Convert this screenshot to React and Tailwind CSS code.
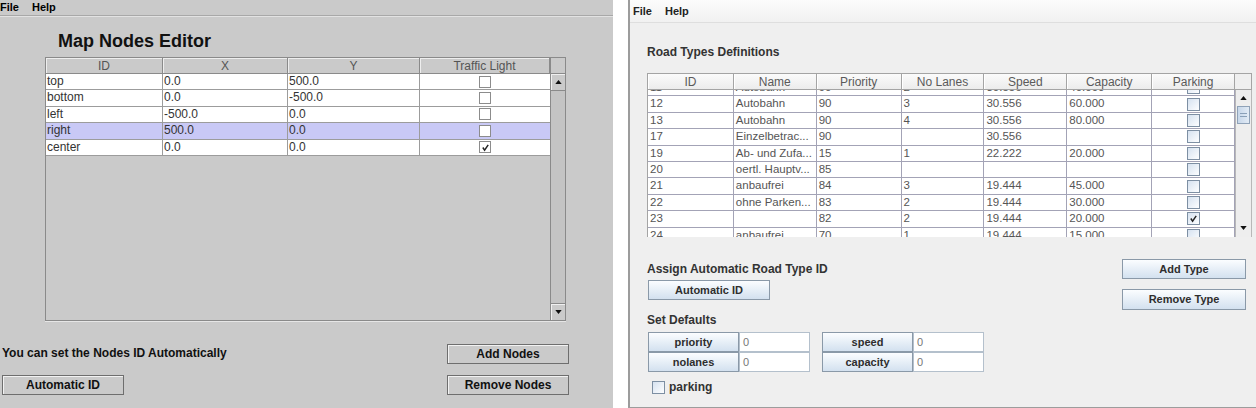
import { useLayoutEffect, useRef } from "react";

const nodeRows = [
  { id: "top", x: "0.0", y: "500.0", light: false },
  { id: "bottom", x: "0.0", y: "-500.0", light: false },
  { id: "left", x: "-500.0", y: "0.0", light: false },
  { id: "right", x: "500.0", y: "0.0", light: false, selected: true },
  { id: "center", x: "0.0", y: "0.0", light: true },
];

const roadCols = [
  { name: "ID", w: "w-[86px]" },
  { name: "Name", w: "w-[83px]" },
  { name: "Priority", w: "w-[85px]" },
  { name: "No Lanes", w: "w-[83px]" },
  { name: "Speed", w: "w-[83px]" },
  { name: "Capacity", w: "w-[85px]" },
  { name: "Parking", w: "w-[83px]" },
];

const roadRows = [
  ["11", "Autobahn", "90", "2", "30.556", "40.000", false],
  ["12", "Autobahn", "90", "3", "30.556", "60.000", false],
  ["13", "Autobahn", "90", "4", "30.556", "80.000", false],
  ["17", "Einzelbetrac...", "90", "", "30.556", "", false],
  ["19", "Ab- und Zufa...", "15", "1", "22.222", "20.000", false],
  ["20", "oertl. Hauptv...", "85", "", "", "", false],
  ["21", "anbaufrei", "84", "3", "19.444", "45.000", false],
  ["22", "ohne Parken...", "83", "2", "19.444", "30.000", false],
  ["23", "", "82", "2", "19.444", "20.000", true],
  ["24", "anbaufrei", "70", "1", "19.444", "15.000", false],
];

function Check({ className }) {
  return (
    <svg viewBox="0 0 10 10" className={className}>
      <path d="M2 5 L4 8 L8 2" fill="none" stroke="#222" strokeWidth="1.6" />
    </svg>
  );
}

function MetalButton({ children }) {
  return (
    <button className="h-[20px] w-[122px] bg-[#cacaca] border border-[#6e6e6e] shadow-[inset_1px_1px_0_#f2f2f2] text-[12px] font-bold text-[#111] flex items-center justify-center">
      {children}
    </button>
  );
}

function OceanButton({ children, className }) {
  return (
    <button className={"h-[20px] border border-[#8a99a8] bg-linear-to-b from-[#fbfdff] to-[#d3e1ef] text-[11px] font-bold text-[#2e2e2e] flex items-center justify-center " + className}>
      {children}
    </button>
  );
}

function Arrow({ up, className }) {
  return (
    <svg viewBox="0 0 8 5" className={"w-[7px] h-[4px] " + (className || "")}>
      <path d={up ? "M0 5 L4 0 L8 5 Z" : "M0 0 L8 0 L4 5 Z"} fill="#111" />
    </svg>
  );
}

function NodesEditor() {
  const cols = ["w-[117px]", "w-[125px]", "w-[132px]", "w-[130px]"];
  return (
    <div className="w-[613px] h-full shrink-0 bg-[#cacaca] flex flex-col">
      <div className="h-[16px] flex items-center gap-[13px] text-[11px] font-bold text-black border-b border-[#a8a8a8] shadow-[0_1px_0_#e2e2e2]">
        <span>File</span>
        <span>Help</span>
      </div>
      <h1 className="pl-[58px] pt-[15px] h-[41px] text-[18px] leading-[20px] font-bold text-[#111]">
        Map Nodes Editor
      </h1>
      <div className="ml-[45px] w-[521px] h-[264px] flex border-l border-b border-[#8a8a8a] shadow-[0_1px_0_#e6e6e6]">
        <div className="w-[504px] flex flex-col">
          <div className="flex h-[17px] border-t border-[#8a8a8a]">
            {["ID", "X", "Y", "Traffic Light"].map((c, i) => (
              <div key={c} className={cols[i] + " h-full flex items-center justify-center text-[12px] text-[#555] border-r border-b border-[#8a8a8a] shadow-[inset_1px_1px_0_#eeeeee]"}>
                {c}
              </div>
            ))}
          </div>
          {nodeRows.map((r) => (
            <div key={r.id} className={"flex h-[16.4px] border-b border-[#9c9c9c] text-[12px] text-[#333] " + (r.selected ? "bg-[#c9c9f6]" : "bg-white")}>
              <div className={cols[0] + " pl-[1px] border-r border-[#9c9c9c] leading-[15px]"}>{r.id}</div>
              <div className={cols[1] + " pl-[1px] border-r border-[#9c9c9c] leading-[15px]"}>{r.x}</div>
              <div className={cols[2] + " pl-[1px] border-r border-[#9c9c9c] leading-[15px]"}>{r.y}</div>
              <div className={cols[3] + " flex items-center justify-center"}>
                <div className="w-[12px] h-[12px] bg-white border border-[#8c8c8c] flex items-center justify-center">
                  {r.light && <Check className="w-[9px] h-[9px]" />}
                </div>
              </div>
            </div>
          ))}
        </div>
        <div className="w-[17px] flex flex-col border-l border-r border-[#8a8a8a]">
          <div className="h-[17px] border-t border-b border-[#8a8a8a]" />
          <div className="h-[17px] flex items-center justify-center border-b border-[#8a8a8a] shadow-[inset_1px_1px_0_#f0f0f0]">
            <Arrow up />
          </div>
          <div className="flex-1 bg-[#c4c4c4]" />
          <div className="h-[17px] flex items-center justify-center border-t border-[#8a8a8a] shadow-[inset_1px_1px_0_#f0f0f0]">
            <Arrow />
          </div>
        </div>
      </div>
      <div className="flex-1 flex items-end justify-between pl-[2px] pr-[44px] pb-[13px]">
        <div className="flex flex-col gap-[15px]">
          <div className="text-[12px] font-bold text-[#111] leading-[14px]">You can set the Nodes ID Automatically</div>
          <MetalButton>Automatic ID</MetalButton>
        </div>
        <div className="flex flex-col gap-[11px]">
          <MetalButton>Add Nodes</MetalButton>
          <MetalButton>Remove Nodes</MetalButton>
        </div>
      </div>
    </div>
  );
}

function OceanCheck({ checked }) {
  return (
    <div className="w-[13px] h-[13px] border border-[#7d8fa3] bg-linear-to-br from-[#d6e2f0] to-[#fdfeff] flex items-center justify-center">
      {checked && <Check className="w-[9px] h-[9px]" />}
    </div>
  );
}

function RoadTypes() {
  const viewRef = useRef(null);
  useLayoutEffect(() => {
    if (viewRef.current) viewRef.current.scrollTop = 10;
  }, []);

  const field = "h-[20px] w-[71px] bg-white border border-[#b4c0cc] text-[11px] text-[#777] pl-[3px] flex items-center";

  return (
    <div className="flex-1 h-full bg-[#efefef] border-l-2 border-b border-[#9c9c9c] flex flex-col">
      <div className="h-[23px] bg-linear-to-b from-[#fcfcfc] to-[#f1f1f1] border-b border-[#dedede] flex items-start pt-[3px] pl-[3px] gap-[13px] text-[11px] font-bold text-[#222]">
        <span>File</span>
        <span>Help</span>
      </div>
      <div className="pl-[17px] pt-[22px] text-[12px] font-bold text-[#333] leading-[14px]">Road Types Definitions</div>
      <div className="ml-[17px] mt-[14px] w-[605px] h-[164px] flex flex-col border-l border-t border-[#a4a4a4]">
        <div className="flex h-[16px]">
          {roadCols.map((c) => (
            <div key={c.name} className={c.w + " h-full flex items-center justify-center text-[12px] text-[#5a5a5a] bg-linear-to-b from-[#fbfbfb] to-[#ececec] border-r border-b border-[#a4a4a4] shadow-[inset_1px_0_0_#ffffff]"}>
              {c.name}
            </div>
          ))}
          <div className="w-[17px] h-full bg-[#efefef] border-r border-b border-[#a4a4a4]" />
        </div>
        <div className="flex-1 flex min-h-0">
          <div ref={viewRef} className="w-[588px] overflow-hidden bg-white">
            {roadRows.map((r) => (
              <div key={r[0]} className="flex h-[16.4px] border-b border-[#a3a3b6] text-[11.5px] text-[#555]">
                {r.slice(0, 6).map((v, i) => (
                  <div key={i} className={roadCols[i].w + " pl-[2px] border-r border-[#a3a3b6] leading-[15px] whitespace-nowrap overflow-hidden"}>
                    {v}
                  </div>
                ))}
                <div className={roadCols[6].w + " flex items-center justify-center border-r border-[#a3a3b6]"}>
                  <OceanCheck checked={r[6]} />
                </div>
              </div>
            ))}
          </div>
          <div className="w-[17px] flex flex-col bg-[#eeeeee] border-l border-r border-[#b8b8b8]">
            <div className="h-[16px] flex items-center justify-center">
              <Arrow up />
            </div>
            <div className="h-[18px] mx-[1px] border border-[#8fa2b8] bg-linear-to-r from-[#c7d7ea] to-[#e2ebf5] flex flex-col items-center justify-center gap-[2px]">
              <div className="w-[7px] h-px bg-[#8aa0b8]" />
              <div className="w-[7px] h-px bg-[#8aa0b8]" />
            </div>
            <div className="flex-1" />
            <div className="h-[18px] flex items-center justify-center">
              <Arrow />
            </div>
          </div>
        </div>
      </div>
      <div className="flex-1 flex pl-[17px] pr-[10px]">
        <div className="flex flex-col">
          <div className="mt-[25px] text-[12px] font-bold text-[#333] leading-[14px]">Assign Automatic Road Type ID</div>
          <OceanButton className="mt-[4px] ml-[1px] w-[122px]">Automatic ID</OceanButton>
          <div className="mt-[13px] text-[12px] font-bold text-[#333] leading-[14px]">Set Defaults</div>
          <div className="mt-[5px] ml-[1px] flex flex-col">
            <div className="flex items-center">
              <OceanButton className="w-[91px]">priority</OceanButton>
              <div className={field}>0</div>
              <OceanButton className="ml-[12px] w-[91px]">speed</OceanButton>
              <div className={field}>0</div>
            </div>
            <div className="flex items-center">
              <OceanButton className="w-[91px]">nolanes</OceanButton>
              <div className={field}>0</div>
              <OceanButton className="ml-[12px] w-[91px]">capacity</OceanButton>
              <div className={field}>0</div>
            </div>
          </div>
          <label className="mt-[8px] ml-[5px] flex items-center gap-[4px] text-[12px] font-bold text-[#333] leading-[14px]">
            <OceanCheck checked={false} />
            parking
          </label>
        </div>
        <div className="ml-auto flex flex-col gap-[10px] pt-[22px]">
          <OceanButton className="w-[124px]">Add Type</OceanButton>
          <OceanButton className="w-[124px] h-[21px]">Remove Type</OceanButton>
        </div>
      </div>
    </div>
  );
}

export default function App() {
  return (
    <div className="w-[1256px] h-[408px] bg-white flex gap-[15px] font-['Liberation_Sans',Arial,sans-serif] overflow-hidden">
      <NodesEditor />
      <RoadTypes />
    </div>
  );
}
